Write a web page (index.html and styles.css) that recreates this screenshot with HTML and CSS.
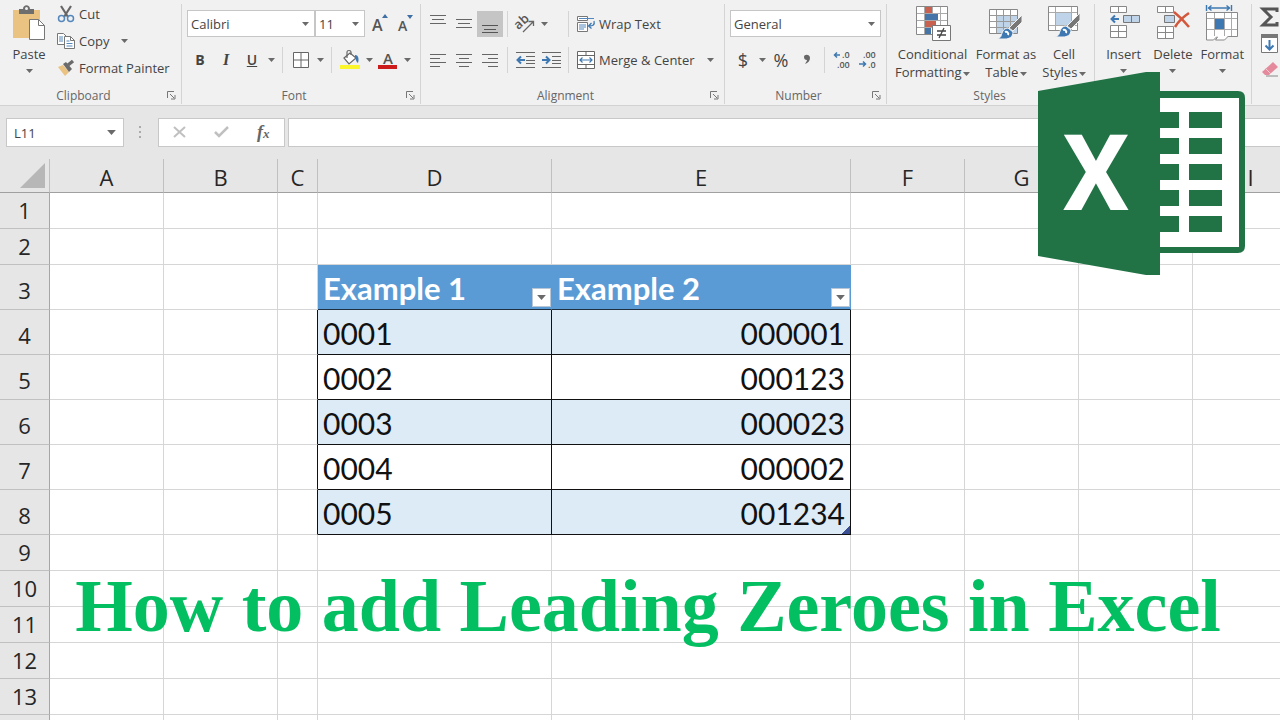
FILE: index.html
```html
<!DOCTYPE html>
<html lang="en">
<head>
    <meta charset="UTF-8">
    <meta name="viewport" content="width=device-width, initial-scale=1.0">
    <title>How to add Leading Zeroes in Excel</title>
    <link rel="stylesheet" href="styles.css">
</head>
<body>
    <!-- Shared icons -->
    <svg class="defs" width="0" height="0" aria-hidden="true">
        <symbol id="arrow" viewBox="0 0 7 4"><path d="M0 0h7L3.5 4z" fill="#6a6a6a"/></symbol>
        <symbol id="launcher" viewBox="0 0 9 9"><path d="M.5 7V.5H7M3 3l4 4M8 4v4H4" fill="none" stroke="#777"/></symbol>
        <symbol id="brush" viewBox="0 0 28 28">
            <path d="M26 1v7l-9 9-4-3z" fill="#777" stroke="#f1f1f1"/>
            <path d="M12 14l5 4c0 5-4 7-8 7H1c4-1 4-3 5-6 1-3 3-5 6-5z" fill="#3e78b2" stroke="#f1f1f1"/>
            <path d="M9 18c2-1 4 1 3 3" fill="none" stroke="#fff" stroke-width="2"/>
        </symbol>
    </svg>

    <div class="ribbon">
        <section class="group clipboard">
            <div class="group-body">
                <button class="big-btn paste">
                    <svg width="34" height="36" viewBox="0 0 34 36">
                        <path d="M1 5h27v28H1z" fill="#eac282"/>
                        <path d="M7 9V4h4c0-5 7-5 7 0h4v5z" fill="#6e6e6e"/>
                        <circle cx="14.500" cy="3.500" r="1.500" fill="#f1f1f1"/>
                        <path d="M17.500 14.500h9l6 6v14h-15z" fill="#fff" stroke="#777"/>
                        <path d="M26.500 14.500v6h6" fill="none" stroke="#777"/>
                    </svg>
                    <span>Paste</span>
                    <svg class="arrow" width="7" height="4"><use href="#arrow"/></svg>
                </button>
                <div class="clip-list">
                    <button class="text-btn">
                        <svg width="18" height="18" viewBox="0 0 18 18">
                            <path d="M4 1l7 11M14 1L7 12" fill="none" stroke="#666" stroke-width="2.200"/>
                            <circle cx="4.500" cy="13.500" r="3" fill="none" stroke="#5488bd" stroke-width="1.500"/>
                            <circle cx="13.500" cy="13.500" r="3" fill="none" stroke="#5488bd" stroke-width="1.500"/>
                        </svg>
                        Cut
                    </button>
                    <button class="text-btn">
                        <svg width="18" height="18" viewBox="0 0 18 18">
                            <path d="M.5 1.500h6l3 3v8h-9z" fill="#fff" stroke="#777"/>
                            <path d="M2 5h4M2 7h4M2 9h4" stroke="#5488bd"/>
                            <path d="M7.500 4.500h6l4 4v8h-10z" fill="#fff" stroke="#777"/>
                            <path d="M13.500 4.500v4h4" fill="none" stroke="#777"/>
                            <path d="M9.500 9h3M9.500 11.500h6M9.500 14h6" stroke="#5488bd"/>
                        </svg>
                        Copy
                        <svg class="arrow copy-arrow" width="7" height="4"><use href="#arrow"/></svg>
                    </button>
                    <button class="text-btn">
                        <svg width="18" height="18" viewBox="0 0 18 18">
                            <path d="M1 8l5-2 6 7-4 4z" fill="#eac282"/>
                            <path d="M6 5l3-2 6 7-3 3z" fill="#6a6a6a"/>
                            <path d="M11 6l5-4" stroke="#6a6a6a" stroke-width="3.500"/>
                        </svg>
                        Format Painter
                    </button>
                </div>
            </div>
            <footer><span>Clipboard</span><button class="launcher" aria-label="Clipboard settings"><svg width="9" height="9"><use href="#launcher"/></svg></button></footer>
        </section>

        <section class="group font">
            <div class="group-body rows">
                <div class="row">
                    <div class="combo font-name">
                        <select aria-label="Font"><option>Calibri</option></select>
                        <svg class="arrow" width="7" height="4"><use href="#arrow"/></svg>
                    </div>
                    <div class="combo font-size">
                        <select aria-label="Font size"><option>11</option></select>
                        <svg class="arrow" width="7" height="4"><use href="#arrow"/></svg>
                    </div>
                    <button class="icon-btn grow" aria-label="Increase font size">
                        <svg width="18" height="20" viewBox="0 0 18 20"><text x="1" y="17" font-size="16">A</text><path d="M11 4l3-4 3 4z" fill="#3e6fa5"/></svg>
                    </button>
                    <button class="icon-btn" aria-label="Decrease font size">
                        <svg width="18" height="20" viewBox="0 0 18 20"><text x="1" y="17" font-size="14">A</text><path d="M10 1h6l-3 4z" fill="#3e6fa5"/></svg>
                    </button>
                </div>
                <div class="row">
                    <button class="icon-btn bold">B</button>
                    <button class="icon-btn italic">I</button>
                    <button class="icon-btn underline">U</button>
                    <button class="drop" aria-label="Underline options"><svg class="arrow" width="7" height="4"><use href="#arrow"/></svg></button>
                    <i class="sep"></i>
                    <button class="icon-btn" aria-label="Borders">
                        <svg width="16" height="16" viewBox="0 0 16 16"><path d="M.5.5h15v15H.5z" fill="#fff" stroke="#666"/><path d="M8 0v16M0 8h16" stroke="#666"/></svg>
                    </button>
                    <button class="drop" aria-label="Border options"><svg class="arrow" width="7" height="4"><use href="#arrow"/></svg></button>
                    <i class="sep"></i>
                    <button class="icon-btn" aria-label="Fill colour">
                        <svg width="20" height="20" viewBox="0 0 20 20">
                            <path d="M4 8l6-5 6 5-7 6z" fill="#fff" stroke="#666" stroke-width="1.200"/>
                            <path d="M7 8V2c0-2 4-2 4 0v3" fill="none" stroke="#666" stroke-width="1.200"/>
                            <path d="M15 5c4 0 4 5 3 8-2-1-2-4-3-5z" fill="#3e78b2"/>
                            <path d="M0 15h20v4H0z" fill="#fbf62c"/>
                        </svg>
                    </button>
                    <button class="drop" aria-label="Fill colour options"><svg class="arrow" width="7" height="4"><use href="#arrow"/></svg></button>
                    <button class="icon-btn" aria-label="Font colour">
                        <svg width="20" height="20" viewBox="0 0 20 20"><text x="5" y="14" font-size="15">A</text><path d="M0 15h19v4H0z" fill="#cb1b1b"/></svg>
                    </button>
                    <button class="drop" aria-label="Font colour options"><svg class="arrow" width="7" height="4"><use href="#arrow"/></svg></button>
                </div>
            </div>
            <footer><span>Font</span><button class="launcher" aria-label="Font settings"><svg width="9" height="9"><use href="#launcher"/></svg></button></footer>
        </section>

        <section class="group alignment">
            <div class="group-body rows">
                <div class="row">
                    <button class="icon-btn" aria-label="Top align"><svg width="16" height="20" viewBox="0 0 16 20"><path d="M0 1.500h16M2 5.500h12M0 9.500h16" stroke="#666"/></svg></button>
                    <button class="icon-btn" aria-label="Middle align"><svg width="16" height="20" viewBox="0 0 16 20"><path d="M0 5.500h16M2 9.500h12M0 13.500h16" stroke="#666"/></svg></button>
                    <button class="icon-btn active" aria-label="Bottom align"><svg width="16" height="20" viewBox="0 0 16 20"><path d="M0 11.500h16M2 15.500h12M0 18.500h16" stroke="#555"/></svg></button>
                    <i class="sep"></i>
                    <button class="icon-btn" aria-label="Orientation">
                        <svg width="20" height="20" viewBox="0 0 20 20"><text x="1" y="14" font-size="13" transform="rotate(-42 5 12)">ab</text><path d="M8 18L18 8M13.500 7.500H18.500V12" fill="none" stroke="#666" stroke-width="1.300"/></svg>
                    </button>
                    <button class="drop" aria-label="Orientation options"><svg class="arrow" width="7" height="4"><use href="#arrow"/></svg></button>
                    <i class="sep wrap-sep"></i>
                    <button class="text-btn">
                        <svg width="18" height="18" viewBox="0 0 18 18">
                            <path d="M.5 1.500h10v4H.5zM.5 7.500h10v9H.5z" fill="#fff" stroke="#777"/>
                            <path d="M2 3.500h15M2 10h7M2 12h7M2 14h5" stroke="#5488bd"/>
                            <path d="M17 6c1 4-1 5-5 5M14.500 8L11.500 11l3 2.500" fill="none" stroke="#3e78b2" stroke-width="1.300"/>
                        </svg>
                        Wrap Text
                    </button>
                </div>
                <div class="row">
                    <button class="icon-btn" aria-label="Align left"><svg width="16" height="14" viewBox="0 0 16 14"><path d="M0 1.500h16M0 5.500h10M0 9.500h16M0 13.500h10" stroke="#666"/></svg></button>
                    <button class="icon-btn" aria-label="Center"><svg width="16" height="14" viewBox="0 0 16 14"><path d="M0 1.500h16M3 5.500h10M0 9.500h16M3 13.500h10" stroke="#666"/></svg></button>
                    <button class="icon-btn" aria-label="Align right"><svg width="16" height="14" viewBox="0 0 16 14"><path d="M0 1.500h16M6 5.500h10M0 9.500h16M6 13.500h10" stroke="#666"/></svg></button>
                    <i class="sep"></i>
                    <button class="icon-btn" aria-label="Decrease indent">
                        <svg width="19" height="16" viewBox="0 0 19 16"><path d="M0 .5h19M10 4.500h9M10 8.500h9M10 11.500h9M0 15.500h19" stroke="#666"/><path d="M9 8H2M5 4.500L1.500 8 5 11.500" fill="none" stroke="#3e78b2" stroke-width="2"/></svg>
                    </button>
                    <button class="icon-btn" aria-label="Increase indent">
                        <svg width="19" height="16" viewBox="0 0 19 16"><path d="M0 .5h19M10 4.500h9M10 8.500h9M10 11.500h9M0 15.500h19" stroke="#666"/><path d="M0 8h7M4 4.500L7.500 8 4 11.500" fill="none" stroke="#3e78b2" stroke-width="2"/></svg>
                    </button>
                    <i class="sep"></i>
                    <button class="text-btn merge">
                        <svg width="18" height="18" viewBox="0 0 18 18">
                            <path d="M.5.500h17v17H.5zM.5 4.500h17M.5 13.500h17M9 .5v4M9 13.500v4" fill="#fff" stroke="#666"/>
                            <path d="M3 9h12M5.500 6.500L3 9l2.500 2.500M12.500 6.500L15 9l-2.500 2.500" fill="none" stroke="#3e78b2" stroke-width="1.200"/>
                        </svg>
                        Merge &amp; Center
                    </button>
                    <button class="drop" aria-label="Merge options"><svg class="arrow" width="7" height="4"><use href="#arrow"/></svg></button>
                </div>
            </div>
            <footer><span>Alignment</span><button class="launcher" aria-label="Alignment settings"><svg width="9" height="9"><use href="#launcher"/></svg></button></footer>
        </section>

        <section class="group number">
            <div class="group-body rows">
                <div class="row">
                    <div class="combo format">
                        <select aria-label="Number format"><option>General</option></select>
                        <svg class="arrow" width="7" height="4"><use href="#arrow"/></svg>
                    </div>
                </div>
                <div class="row">
                    <button class="icon-btn symbol">$</button>
                    <button class="drop" aria-label="Currency options"><svg class="arrow" width="7" height="4"><use href="#arrow"/></svg></button>
                    <button class="icon-btn symbol">%</button>
                    <button class="icon-btn" aria-label="Comma style"><svg width="8" height="12" viewBox="0 0 8 12"><path d="M1 3c0-3 6-3 6 1 0 3-2 5-5 6 1-2 2-3 2-4-2 0-3-1-3-3z" fill="#666"/></svg></button>
                    <i class="sep"></i>
                    <button class="icon-btn" aria-label="Increase decimal">
                        <svg width="18" height="20" viewBox="0 0 18 20"><text x="9" y="8" font-size="9">.0</text><text x="4" y="18" font-size="9">.00</text><path d="M7 5H2M4 2.500L1.500 5 4 7.500" fill="none" stroke="#3e78b2" stroke-width="1.500"/></svg>
                    </button>
                    <button class="icon-btn" aria-label="Decrease decimal">
                        <svg width="18" height="20" viewBox="0 0 18 20"><text x="4" y="8" font-size="9">.00</text><text x="9" y="18" font-size="9">.0</text><path d="M0 14h6M4 11.500L6.500 14 4 16.500" fill="none" stroke="#3e78b2" stroke-width="1.500"/></svg>
                    </button>
                </div>
            </div>
            <footer><span>Number</span><button class="launcher" aria-label="Number settings"><svg width="9" height="9"><use href="#launcher"/></svg></button></footer>
        </section>

        <section class="group styles">
            <div class="group-body">
                <button class="big-btn conditional">
                    <svg width="36" height="36" viewBox="0 0 36 36">
                        <path d="M1.500 1.500h31v28h-31z" fill="#fff" stroke="#888"/>
                        <path d="M2 8.500h30M2 15.500h30M2 22.500h30M9.500 2v27M17.500 2v27M25.500 2v27" stroke="#aaa"/>
                        <path d="M10 2h7v6h-7zM10 16h11v6H10z" fill="#c8614f"/>
                        <path d="M10 9h13v6H10zM10 23h6v6h-6z" fill="#4474a8"/>
                        <path d="M17.500 20.500h18v15h-18z" fill="#fff" stroke="#777"/>
                        <path d="M22 26h9M22 30h9M29 23l-5 10" stroke="#444" stroke-width="1.300"/>
                    </svg>
                    <span>Conditional</span>
                    <span>Formatting <svg class="arrow" width="7" height="4"><use href="#arrow"/></svg></span>
                </button>
                <button class="big-btn format-table">
                    <svg width="36" height="36" viewBox="0 0 36 36">
                        <path d="M1.500 4.500h28v24h-28z" fill="#fff" stroke="#888"/>
                        <path d="M9 11h20v17H9z" fill="#bfd4e8"/>
                        <path d="M2 10.500h27M2 16.500h27M2 22.500h27M8.500 5v23M15.500 5v23M22.500 5v23" stroke="#999"/>
                        <use href="#brush" x="8" y="9" width="28" height="28"/>
                    </svg>
                    <span>Format as</span>
                    <span>Table <svg class="arrow" width="7" height="4"><use href="#arrow"/></svg></span>
                </button>
                <button class="big-btn cell-styles">
                    <svg width="36" height="36" viewBox="0 0 36 36">
                        <path d="M2.500 1.500h29v24h-29z" fill="#fff" stroke="#888"/>
                        <path d="M3 7.500h28M3 20.500h28M9.500 2v23M25.500 2v23" stroke="#aaa"/>
                        <path d="M10 8h15v12H10z" fill="#bfd4e8"/>
                        <use href="#brush" x="8" y="7" width="28" height="28"/>
                    </svg>
                    <span>Cell</span>
                    <span>Styles <svg class="arrow" width="7" height="4"><use href="#arrow"/></svg></span>
                </button>
            </div>
            <footer><span>Styles</span></footer>
        </section>

        <section class="group cells">
            <div class="group-body">
                <button class="big-btn">
                    <svg width="32" height="36" viewBox="0 0 32 36">
                        <path d="M2.500 1.500h16v6h-16zM10.500 1.500v6M2.500 20.500h16v12h-16zM10.500 20.500v12M2.500 26.500h16" fill="#fff" stroke="#888"/>
                        <path d="M15.500 10.500h16v7h-16zM23.500 10.500v7" fill="#bfd4e8" stroke="#777"/>
                        <path d="M11 14H4M7 10.500L3.500 14 7 17.500" fill="none" stroke="#3e78b2" stroke-width="2"/>
                    </svg>
                    <span>Insert</span>
                    <svg class="arrow" width="7" height="4"><use href="#arrow"/></svg>
                </button>
                <button class="big-btn">
                    <svg width="34" height="36" viewBox="0 0 34 36">
                        <path d="M1.500 1.500h16v6h-16zM9.500 1.500v6M1.500 21.500h16v12h-16zM9.500 21.500v12M1.500 27.500h16" fill="#fff" stroke="#888"/>
                        <path d="M8.500 10.500h10v7h-10z" fill="#bfd4e8" stroke="#777"/>
                        <path d="M18 7c5 4 11 10 15 15M33 8c-6 4-11 9-14 14" fill="none" stroke="#d3573c" stroke-width="2.500"/>
                    </svg>
                    <span>Delete</span>
                    <svg class="arrow" width="7" height="4"><use href="#arrow"/></svg>
                </button>
                <button class="big-btn">
                    <svg width="34" height="36" viewBox="0 0 34 36">
                        <path d="M1.500 0v6M26.500 0v6M3 3h22M6.500.5L3.500 3l3 2.500M21.500.5l3 2.500-3 2.500" fill="none" stroke="#3e78b2" stroke-width="1.400"/>
                        <path d="M1.500 7.500h31v24h-31z" fill="#fff" stroke="#888"/>
                        <path d="M2 13.500h30M2 24.500h30M9.500 8v23M19.500 8v23M26.500 8v23" stroke="#aaa"/>
                        <path d="M10 14h9v10h-9z" fill="#3e78b2"/>
                        <path d="M1.500 31v4h7l3-3h1l-2 3h9l4-4" fill="#fff" stroke="#888"/>
                    </svg>
                    <span>Format</span>
                    <svg class="arrow" width="7" height="4"><use href="#arrow"/></svg>
                </button>
            </div>
        </section>

        <section class="group editing">
            <button class="icon-btn" aria-label="AutoSum"><svg width="17" height="20" viewBox="0 0 17 20"><path d="M16 5V2H2l8 8-8 8h14v-3" fill="none" stroke="#555" stroke-width="3"/></svg></button>
            <button class="icon-btn" aria-label="Fill"><svg width="17" height="19" viewBox="0 0 17 19"><path d="M.5.500h16v18H.5z" fill="#fff" stroke="#777"/><path d="M0 0h17v4H0z" fill="#777"/><path d="M8.500 6v10M4.500 11.500l4 4 4-4" fill="none" stroke="#3e78b2" stroke-width="2"/></svg></button>
            <button class="icon-btn" aria-label="Clear"><svg width="17" height="16" viewBox="0 0 17 16"><path d="M1 11L12 1l5 5-9 8H4z" fill="#e58a9c"/><path d="M4 7l6 6" stroke="#f6c9d1"/><path d="M5 15h12" stroke="#888"/></svg></button>
        </section>
    </div>

    <div class="formula-bar">
        <div class="name-box">
            <input type="text" value="L11" aria-label="Name box">
            <svg class="arrow" width="9" height="5"><use href="#arrow"/></svg>
        </div>
        <svg class="dots" width="3" height="13" viewBox="0 0 3 13"><path d="M0 0h2v2H0zM0 5h2v2H0zM0 10h2v2H0z" fill="#aaa"/></svg>
        <div class="formula-buttons">
            <button aria-label="Cancel"><svg width="13" height="12" viewBox="0 0 13 12"><path d="M1 1l11 10M12 1L1 11" stroke="#c0c0c0" stroke-width="2"/></svg></button>
            <button aria-label="Enter"><svg width="15" height="12" viewBox="0 0 15 12"><path d="M1 6l4 4 9-9" fill="none" stroke="#c0c0c0" stroke-width="2.500"/></svg></button>
            <button class="fx" aria-label="Insert function">f<sub>x</sub></button>
        </div>
        <input class="formula" type="text" aria-label="Formula">
    </div>

    <table class="sheet">
        <colgroup>
            <col class="col-head"><col class="col-std"><col class="col-std"><col class="col-c"><col class="col-d"><col class="col-e"><col class="col-std"><col class="col-std"><col class="col-std"><col>
        </colgroup>
        <thead>
            <tr>
                <th class="corner"><svg width="25" height="25" viewBox="0 0 25 25"><path d="M25 0v25H0z" fill="#b7b7b7"/></svg></th>
                <th>A</th><th>B</th><th>C</th><th>D</th><th>E</th><th>F</th><th>G</th><th></th><th class="col-i">I</th>
            </tr>
        </thead>
        <tbody>
            <tr><th>1</th><td></td><td></td><td></td><td></td><td></td><td></td><td></td><td></td><td></td></tr>
            <tr><th>2</th><td></td><td></td><td></td><td></td><td></td><td></td><td></td><td></td><td></td></tr>
            <tr class="tall title-row">
                <th>3</th><td></td><td></td><td></td>
                <td><div class="field">Example 1 <button aria-label="Filter Example 1"><svg class="arrow" width="9" height="5"><use href="#arrow"/></svg></button></div></td>
                <td><div class="field">Example 2 <button aria-label="Filter Example 2"><svg class="arrow" width="9" height="5"><use href="#arrow"/></svg></button></div></td>
                <td></td><td></td><td></td><td></td>
            </tr>
            <tr class="tall data band"><th>4</th><td></td><td></td><td></td><td>0001</td><td>000001</td><td></td><td></td><td></td><td></td></tr>
            <tr class="tall data"><th>5</th><td></td><td></td><td></td><td>0002</td><td>000123</td><td></td><td></td><td></td><td></td></tr>
            <tr class="tall data band"><th>6</th><td></td><td></td><td></td><td>0003</td><td>000023</td><td></td><td></td><td></td><td></td></tr>
            <tr class="tall data"><th>7</th><td></td><td></td><td></td><td>0004</td><td>000002</td><td></td><td></td><td></td><td></td></tr>
            <tr class="tall data band last"><th>8</th><td></td><td></td><td></td><td>0005</td><td>001234</td><td></td><td></td><td></td><td></td></tr>
            <tr><th>9</th><td></td><td></td><td></td><td></td><td></td><td></td><td></td><td></td><td></td></tr>
            <tr><th>10</th><td></td><td></td><td></td><td></td><td></td><td></td><td></td><td></td><td></td></tr>
            <tr><th>11</th><td></td><td></td><td></td><td></td><td></td><td></td><td></td><td></td><td></td></tr>
            <tr><th>12</th><td></td><td></td><td></td><td></td><td></td><td></td><td></td><td></td><td></td></tr>
            <tr><th>13</th><td></td><td></td><td></td><td></td><td></td><td></td><td></td><td></td><td></td></tr>
            <tr><th></th><td></td><td></td><td></td><td></td><td></td><td></td><td></td><td></td><td></td></tr>
        </tbody>
    </table>

    <!-- Excel logo -->
    <svg class="logo" width="208" height="204" viewBox="0 0 208 204" role="img" aria-label="Excel">
        <path d="M110 19h90q7 0 7 7v148q0 7-7 7h-90z" fill="#217346"/>
        <path d="M110 26h91v149h-91z" fill="#fff"/>
        <path d="M110 40h31v16h-31zM110 66h31v16h-31zM110 92h31v16h-31zM110 118h31v16h-31zM110 144h31v16h-31zM151 40h33v16h-33zM151 66h33v16h-33zM151 92h33v16h-33zM151 118h33v16h-33zM151 144h33v16h-33z" fill="#217346"/>
        <path d="M0 19L108 0h14v203h-14L0 184z" fill="#217346"/>
        <text class="logo-x" x="58" y="138" text-anchor="middle">X</text>
    </svg>

    <h1 class="headline">How to add Leading Zeroes in Excel</h1>
</body>
</html>
```

FILE: styles.css
```css
* {
    box-sizing: border-box;
}
body {
    margin: 0;
    position: relative;
    height: 100vh;
    overflow: hidden;
    background-color: #e6e6e6;
    color: #444;
    font-family: "Open Sans", "Noto Sans", sans-serif;
    font-size: 13px;
}
button, input, select {
    font: inherit;
    color: inherit;
    margin: 0;
    padding: 0;
    border: none;
    background: none;
}
button svg {
    flex: none;
    overflow: visible;
}
svg text {
    fill: #555;
    font-weight: 600;
}
.defs {
    position: absolute;
}
.arrow {
    flex: none;
}

/* Ribbon */
.ribbon {
    display: flex;
    height: 106px;
    padding-top: 4px;
    background-color: #f1f1f1;
    border-bottom: 1px solid #d2d2d2;
    overflow: hidden;
}
.group {
    flex: none;
    display: flex;
    flex-direction: column;
    height: 100px;
    border-right: 1px solid #d4d4d4;
}
.clipboard { width: 182px; }
.font { width: 239px; }
.alignment { width: 304px; }
.number { width: 162px; }
.styles { width: 208px; }
.cells { width: 157px; }
.group-body {
    flex: 1;
    display: flex;
    padding: 1px 0 0 4px;
}
.group footer {
    display: flex;
    align-items: center;
    height: 18px;
    padding-right: 2px;
    font-size: 12px;
    color: #666;
}
.group footer span {
    flex: 1;
    text-align: center;
}
.launcher {
    display: flex;
    width: 12px;
}
.rows {
    flex-direction: column;
    gap: 9px;
    padding-top: 6px;
}
.row {
    display: flex;
    align-items: center;
    height: 27px;
}
.sep {
    width: 1px;
    height: 26px;
    margin: 0 4px;
    background-color: #d4d4d4;
}
.icon-btn {
    flex: none;
    display: flex;
    align-items: center;
    justify-content: center;
    width: 26px;
    height: 26px;
}
.active {
    background-color: #c5c5c5;
}
.drop {
    display: flex;
    align-items: center;
    justify-content: center;
    width: 12px;
    height: 26px;
}
.text-btn {
    display: flex;
    align-items: center;
    gap: 4px;
    white-space: nowrap;
}

.big-btn {
    flex: 1;
    display: flex;
    flex-direction: column;
    align-items: center;
    line-height: 18px;
    white-space: nowrap;
}
.big-btn > svg:first-child {
    margin-bottom: 4px;
}
.big-btn > .arrow {
    margin-top: 6px;
}
.big-btn span .arrow {
    vertical-align: middle;
    margin-left: -2px;
}
.paste {
    flex: none;
    width: 50px;
}
.clip-list {
    display: flex;
    flex-direction: column;
    gap: 9px;
    padding-left: 3px;
}
.clip-list .text-btn {
    height: 18px;
}
.copy-arrow {
    margin-left: 8px;
}

.combo {
    flex: none;
    display: grid;
    align-items: center;
    height: 27px;
    background-color: #fff;
    border: 1px solid #c6c6c6;
}
.combo select, .combo .arrow {
    grid-area: 1 / 1;
}
.combo select {
    appearance: none;
    width: 100%;
    padding-left: 3px;
}
.combo .arrow {
    justify-self: end;
    margin-right: 5px;
    pointer-events: none;
}
.font-name { width: 128px; }
.font-size { width: 50px; }
.format { width: 151px; }
.grow {
    margin-left: 2px;
}
.font .row {
    padding-left: 1px;
}
.font .sep {
    margin: 0 5px;
}
.bold {
    font-weight: 700;
    font-size: 14px;
}
.italic {
    font-family: "Liberation Serif", serif;
    font-style: italic;
    font-weight: 700;
    font-size: 16px;
}
.underline {
    text-decoration: underline;
    font-weight: 600;
    font-size: 14px;
}
.wrap-sep {
    margin-left: 18px;
}
.alignment .text-btn {
    padding-left: 4px;
}
.merge {
    margin-right: 10px;
}
.symbol {
    font-size: 18px;
}
.number .row {
    padding-left: 1px;
}
.conditional {
    flex: none;
    width: 83px;
}
.format-table {
    flex: none;
    width: 64px;
}
.cell-styles {
    padding-right: 4px;
}
.cells .group-body {
    padding-right: 4px;
}
.editing {
    flex: 1;
    gap: 0;
    padding-left: 4px;
    border-right: none;
}

/* Formula bar */
.formula-bar {
    display: flex;
    align-items: center;
    height: 53px;
    padding-left: 6px;
}
.name-box, .formula-buttons, .formula {
    height: 29px;
    background-color: #fff;
    border: 1px solid #c8c8c8;
}
.name-box {
    display: flex;
    align-items: center;
    width: 118px;
    padding: 0 7px;
}
.name-box input {
    flex: 1;
    min-width: 0;
}
.dots {
    margin: 0 16px 0 15px;
}
.formula-buttons {
    display: flex;
    width: 127px;
    margin-right: 3px;
}
.formula-buttons button {
    flex: 1;
}
.fx {
    color: #666;
    font-family: "Liberation Serif", serif;
    font-style: italic;
    font-weight: 700;
    font-size: 18px;
    line-height: 20px;
}
.fx sub {
    font-size: 13px;
    vertical-align: baseline;
}
.formula {
    flex: 1;
    min-width: 0;
    border-right: none;
}

/* Sheet */
.sheet {
    width: 100%;
    table-layout: fixed;
    border-collapse: separate;
    border-spacing: 0;
    background-color: #fff;
}
.col-head { width: 50px; }
.col-std { width: 114px; }
.col-c { width: 40px; }
.col-d { width: 234px; }
.col-e { width: 299px; }
.sheet th {
    height: 36px;
    padding: 0 0 2px;
    background-color: #e6e6e6;
    border-right: 1px solid #a6a6a6;
    border-bottom: 1px solid #c0c0c0;
    color: #262626;
    font-size: 22px;
    font-weight: 400;
    line-height: 32px;
    vertical-align: bottom;
}
.sheet thead th {
    height: 34px;
    padding: 0;
    border-right-color: #c0c0c0;
    border-bottom-color: #a0a0a0;
    line-height: 30px;
}
.sheet thead .corner {
    padding-right: 4px;
    line-height: 0;
    text-align: right;
    vertical-align: middle;
}
.sheet thead .col-i {
    padding-left: 28px;
}
.sheet td {
    padding: 0 5px 2px;
    border-right: 1px solid #d6d6d6;
    border-bottom: 1px solid #d6d6d6;
    color: #111;
    font-family: Lato, sans-serif;
    font-size: 30px;
    line-height: 38px;
    vertical-align: bottom;
}
.sheet tr > :last-child {
    border-right: none;
}
.sheet .tall th {
    height: 45px;
    padding-bottom: 3px;
}
.sheet .title-row td:nth-child(5), .sheet .title-row td:nth-child(6) {
    padding-right: 0;
    background-color: #5b9bd5;
    border-right-color: #5b9bd5;
    border-bottom-color: #1f2f40;
    color: #fff;
    font-size: 31px;
    font-weight: 700;
}
.field {
    display: flex;
    justify-content: space-between;
    align-items: flex-end;
}
.field button {
    display: flex;
    align-items: center;
    justify-content: center;
    width: 19px;
    height: 19px;
    background-color: #fff;
    border: 1px solid #b9c6d6;
}
.data td:nth-child(4), .data td:nth-child(5), .data td:nth-child(6) {
    border-right-color: #111;
}
.data td:nth-child(5), .data td:nth-child(6) {
    border-bottom-color: #111;
}
.data td:nth-child(6) {
    text-align: right;
}
.band td:nth-child(5), .band td:nth-child(6) {
    background-color: #ddebf7;
}
/* resize handle in the table corner */
.last td:nth-child(6) {
    background-image: linear-gradient(135deg, transparent 50%, #3b4f95 50%);
    background-repeat: no-repeat;
    background-position: right bottom;
    background-size: 8px 8px;
}

.logo {
    position: absolute;
    top: 72px;
    right: 34px;
}
.logo .logo-x {
    fill: #fff;
    font-family: Roboto, "Liberation Sans", sans-serif;
    font-size: 106px;
    font-weight: 700;
}
.headline {
    position: absolute;
    top: 562px;
    left: 0;
    right: 0;
    margin: 0;
    padding-left: 16px;
    color: #04bf62;
    font-family: "Liberation Serif", serif;
    font-size: 74px;
    font-weight: 700;
    line-height: 88px;
    text-align: center;
    white-space: nowrap;
}
```
